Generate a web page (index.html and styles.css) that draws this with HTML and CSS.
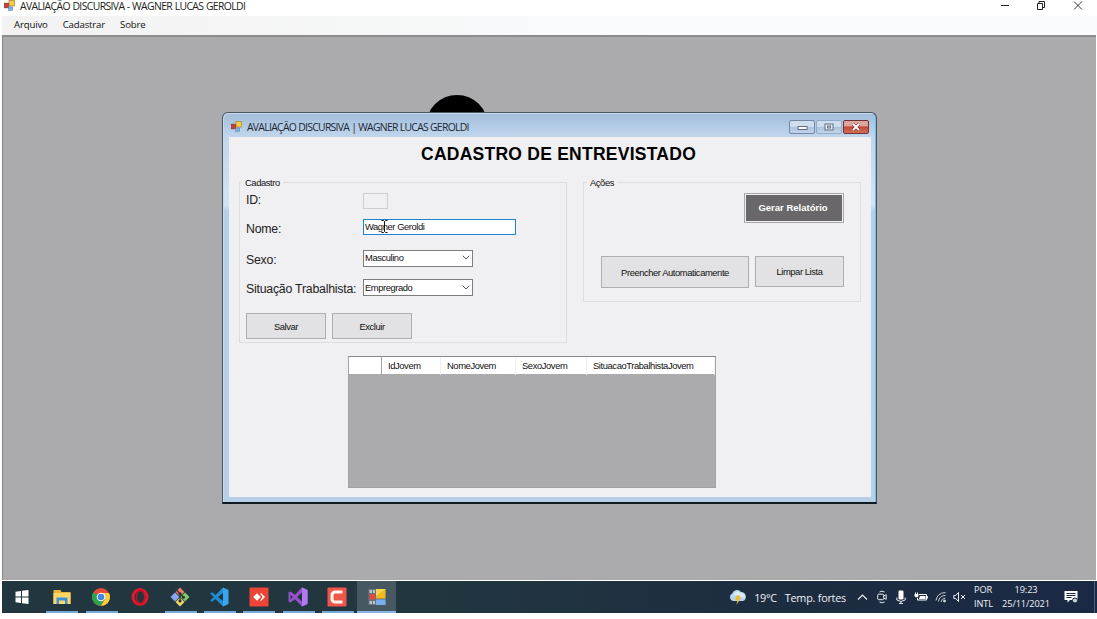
FILE: index.html
```html
<!DOCTYPE html>
<html lang="pt-BR">
<head>
<meta charset="utf-8">
<title>AVALIAÇÃO DISCURSIVA</title>
<link rel="stylesheet" href="styles.css">
</head>
<body>
<svg width="0" height="0" class="defs">
  <defs>
    <symbol id="form" viewBox="0 0 12 12">
      <rect x="5.5" y="0.5" width="6" height="6" fill="#f6cf4a" stroke="#a8862b" stroke-width=".8"/>
      <rect x="0.5" y="3.5" width="4.500" height="5" fill="#cf4034" stroke="#8f3029" stroke-width=".8"/>
      <rect x="5" y="7.500" width="4.500" height="3.700" fill="#7eaee6" stroke="#5e7fae" stroke-width=".6"/>
    </symbol>
  </defs>
</svg>
<header class="titlebar">
  <svg class="appicon" width="11" height="11"><use href="#form"/></svg>
  <span class="caption">AVALIAÇÃO DISCURSIVA - WAGNER LUCAS GEROLDI</span>
  <svg class="winctl" width="84" height="12" viewBox="0 0 84 12" fill="none" stroke="#222">
    <path d="M1 5.500h8"/><path d="M37.500 3.500h5v6h-5zM39 3.500V1.500h5.500v6h-2"/><path d="M74 1.500l8 8M82 1.500l-8 8" stroke-width=".9"/>
  </svg>
</header>
<nav class="menubar"><span>Arquivo</span><span>Cadastrar</span><span>Sobre</span></nav>
<main class="mdi">
  <div class="disc"></div>
  <section class="dialog">
    <div class="dlg-title">
      <svg class="dlg-icon" width="11" height="11"><use href="#form"/></svg>
      <span class="dlg-caption">AVALIAÇÃO DISCURSIVA | WAGNER LUCAS GEROLDI</span>
      <span class="ctl"><svg width="11" height="8" viewBox="0 0 11 8"><rect x="1" y="3.500" width="9" height="3" fill="#fff" stroke="#5d6d83"/></svg></span>
      <span class="ctl ctl-max"><svg width="10" height="8" viewBox="0 0 10 8" fill="none" stroke="#5d6d83"><rect x="1" y="1" width="8" height="6" fill="#e6eef8"/><rect x="3.500" y="3" width="3" height="2"/></svg></span>
      <span class="ctl ctl-close"><svg width="10" height="8" viewBox="0 0 10 8"><path d="M2 1l6 6M8 1l-6 6" stroke="#7c3530" stroke-width="3.200"/><path d="M2 1l6 6M8 1l-6 6" stroke="#fff" stroke-width="1.900"/></svg></span>
    </div>
    <div class="client">
      <h1>CADASTRO DE ENTREVISTADO</h1>
      <div class="groups">
        <fieldset class="group group-form">
          <legend>Cadastro</legend>
          <div class="fields">
            <label class="first">ID:</label><div class="box box-id"></div>
            <label class="low">Nome:</label><div class="box box-name">Wagner Geroldi
              <svg class="ibeam" width="7" height="13" viewBox="0 0 7 13"><path d="M.5 .5h2l1 1 1-1h2M3.500 1.500v10M.5 12.500h2l1-1 1 1h2" fill="none" stroke="#111"/></svg></div>
            <label class="low">Sexo:</label><div class="box combo">Masculino<svg width="8" height="5" viewBox="0 0 8 5"><path d="M.7 .7L4 4 7.300 .7" fill="none" stroke="#555"/></svg></div>
            <label class="low last">Situação Trabalhista:</label><div class="box combo">Empregrado<svg width="8" height="5" viewBox="0 0 8 5"><path d="M.7 .7L4 4 7.300 .7" fill="none" stroke="#555"/></svg></div>
          </div>
          <div class="buttons"><span class="btn">Salvar</span><span class="btn">Excluir</span></div>
        </fieldset>
        <fieldset class="group group-actions">
          <legend>Ações</legend>
          <div class="report">Gerar Relatório</div>
          <div class="actions"><span class="btn btn-fill">Preencher Automaticamente</span><span class="btn btn-clear">Limpar Lista</span></div>
        </fieldset>
      </div>
      <div class="grid">
        <div class="grid-head"><span></span><span>IdJovem</span><span>NomeJovem</span><span>SexoJovem</span><span>SituacaoTrabalhistaJovem</span></div>
      </div>
    </div>
  </section>
</main>
<footer class="taskbar">
  <div class="apps">
    <span class="app"><svg width="20" height="20" viewBox="0 0 20 20" fill="#fff"><path d="M3.500 4.800l5.500-.8v5.500H3.500zM10 3.800l6.500-.9v6.600H10zM3.500 10.500H9V16l-5.500-.8zM10 10.500h6.500v6.600l-6.500-.9z"/></svg></span>
    <span class="app open"><svg width="20" height="20" viewBox="0 0 20 20"><path d="M1.500 3h7l1 2h9v12h-17z" fill="#e9b53c"/><path d="M1.500 6h17v11h-17z" fill="#fbd768"/><path d="M4.500 10.500h11V17H13v-3.500H7V17H4.500z" fill="#3d93d8"/></svg></span>
    <span class="app open"><svg width="20" height="20" viewBox="0 0 20 20"><circle cx="10" cy="10" r="9" fill="#e5493a"/><path d="M2.200 5.500A9 9 0 0 0 9.500 19L14 12.200 10 10z" fill="#2ba24c"/><path d="M10 19A9 9 0 0 0 18 6h-8l4 6z" fill="#fbcf3b"/><circle cx="10" cy="10" r="4.300" fill="#fff"/><circle cx="10" cy="10" r="3.300" fill="#4285e8"/></svg></span>
    <span class="app"><svg width="20" height="20" viewBox="0 0 20 20"><ellipse cx="10" cy="10" rx="7" ry="7.500" fill="none" stroke="#e2182d" stroke-width="3"/><ellipse cx="10.500" cy="10" rx="4.200" ry="6.500" fill="none" stroke="#c11427" stroke-width="1.500"/></svg></span>
    <span class="app open"><svg width="20" height="20" viewBox="0 0 20 20"><path d="M10 .5l4.500 4.500L10 9.500 5.500 5z" fill="#ef7b69"/><path d="M5 5.500L9.500 10 5 14.500.5 10z" fill="#8ba5ec"/><path d="M15 5.500l4.500 4.500-4.500 4.500L10.500 10z" fill="#86cb65"/><path d="M10 10.500l4.500 4.500L10 19.500 5.500 15z" fill="#f3d866"/><path d="M7 3.500L13.500 10.300M10 7v7" stroke="#263238" stroke-width="1.200"/><g fill="#263238"><circle cx="10" cy="6.800" r="1.500"/><circle cx="13.500" cy="10.300" r="1.500"/><circle cx="10" cy="14" r="1.600"/></g></svg></span>
    <span class="app open"><svg width="20" height="20" viewBox="0 0 20 20"><path d="M14 .5L6.500 8 3 5.200 1 6.300 4.800 10 1 13.700l2 1.100L6.500 12l7.500 7.500V14L9 10l5-4z" fill="#238bd0"/><path d="M14 .5l5.500 2.500v14L14 19.500z" fill="#39a5ee"/></svg></span>
    <span class="app open"><svg width="20" height="20" viewBox="0 0 20 20"><path d="M.5.5h19v19H.5z" fill="#ed4438"/><path d="M8 6.200L11.800 10 8 13.800 4.200 10zM11 6.200l1.200 0L16 10l-3.800 3.800H11L13.500 10z" fill="#fff"/></svg></span>
    <span class="app open"><svg width="20" height="20" viewBox="0 0 20 20"><path d="M14 .5L7 7.800 2.500 4.500.5 5.500v9l2 1 4.500-3.300 7 7.300 5.500-2.500V3z" fill="#9452ce"/><path d="M14 .5l5.500 2.500v14L14 19.500z" fill="#b27aec"/><path d="M14 5.500v9L9 10zM2.500 7.500L4.700 10l-2.200 2.500z" fill="#223540"/></svg></span>
    <span class="app open"><svg width="20" height="20" viewBox="0 0 20 20"><rect x=".5" y=".5" width="19" height="19" rx="1" fill="#ef5548"/><path d="M15.500 5H8a3 3 0 0 0-3 3v4a3 3 0 0 0 3 3h7.500" fill="none" stroke="#fff7ef" stroke-width="3"/></svg></span>
    <span class="app open active"><svg width="20" height="20" viewBox="0 0 20 20"><path d="M1.500 2h17v16h-17z" fill="#69757d"/><path d="M9 2h9.500v9.500H9z" fill="#f0b91e"/><path d="M9 2h9.500L9 9z" fill="#f9d651"/><path d="M2.500 7H8v5.500H2.500z" fill="#df4a42"/><path d="M9 12.500h9.500V18H9z" fill="#78aeef"/><path d="M2.500 3H5v3H2.500zM6 3h2v3H6zM2.500 14H5v3H2.500zM6 14h2v3H6z" fill="#bcc5ca"/></svg></span>
  </div>
  <div class="tray">
    <svg width="20" height="18" viewBox="0 0 20 18"><path d="M5 13a4 4 0 0 1-.8-7.500A5 5 0 0 1 13 4a4.700 4.700 0 0 1 2 9z" fill="#b5d8ee"/><path d="M6 7a4 4 0 0 1 7-2 4 4 0 0 1 4 5" fill="#dcedf7"/><path d="M8.500 7.500h4L11 10.500h2L8.500 16.500 9.500 12H7z" fill="#f4b92f"/></svg>
    <span class="temp">19°C</span><span class="weather">Temp. fortes</span>
    <svg class="chev" width="11" height="8" viewBox="0 0 11 8"><path d="M1 6.500L5.500 2 10 6.500" fill="none" stroke="#e6eaee" stroke-width="1.200"/></svg>
    <svg class="cam" width="10" height="14" viewBox="0 0 10 14" fill="none" stroke="#e6eaee"><rect x=".7" y="4.200" width="6" height="5.500" rx="1"/><path d="M6.700 6l2.500-1.300v4.600L6.700 8M2.500 2Q5 .3 7.500 2M2.500 12Q5 13.700 7.500 12"/></svg>
    <svg class="mic" width="10" height="14" viewBox="0 0 10 14"><rect x="2.500" y=".5" width="5" height="9" rx="1.200" fill="#fff"/><path d="M.8 7.500v2.500q4.200 3 8.400 0V7.500M5 11.500v2M3 13.500h4" fill="none" stroke="#e6eaee"/></svg>
    <svg class="bat" width="14" height="10" viewBox="0 0 14 10"><path d="M5 2.500h7.500v5.500H3.500V6M12.500 4.500h1v2" fill="none" stroke="#fff"/><path d="M6 4h5.500v3H5zM.5 2h4v2L3.500 5.200H1.500L.5 4zM1 .5h1v2H1zM3 .5h1v2H3z" fill="#fff"/></svg>
    <svg class="wifi" width="12" height="12" viewBox="0 0 12 12" fill="none" stroke="#c3cad3"><path d="M1 9.500Q2 2 10.500 1.500M3.500 10.500Q4 5 10.500 4.300M6 11Q6.500 7.500 10.500 7"/><circle cx="9.500" cy="10" r="1" fill="#fff"/></svg>
    <svg class="vol" width="13" height="12" viewBox="0 0 13 12" fill="none" stroke="#eef1f4"><path d="M.8 4.500h1.800L5.500 1.500v9L2.600 7.500H.8zM8 4l4 4M12 4L8 8"/></svg>
    <div class="lang"><span>POR</span><span>INTL</span></div>
    <div class="clock"><span>19:23</span><span class="date">25/11/2021</span></div>
    <svg class="note" width="14" height="14" viewBox="0 0 14 14"><path d="M.5 1h13v9H6l-2.500 2.500V10h-3z" fill="#fff"/><path d="M2.500 3.500h9M2.500 5.500h9M2.500 7.500h5" stroke="#1b2a42"/><circle cx="11" cy="10.500" r="2.500" fill="#cbd2da" stroke="#1b2a42"/></svg>
    <i class="peek"></i>
  </div>
</footer>
</body>
</html>
```
FILE: styles.css
```css
* { box-sizing: border-box; }
body { margin: 0; width: 1097px; height: 619px; overflow: hidden; background: #fff; font-family: "Liberation Sans", Arial, sans-serif; color: #111; white-space: nowrap; }
.defs { position: absolute; }
svg { display: block; flex: none; }

.titlebar { display: flex; height: 16px; padding-left: 4px; background: #fefffe; font: 10.4px/13px "Open Sans", sans-serif; color: #222; }
.caption { margin-left: 5px; letter-spacing: -0.61px; word-spacing: 0.4px; }
.winctl { margin-left: auto; margin-right: 13px; }
.menubar { display: flex; height: 19px; margin-left: 2px; padding-left: 12px; gap: 15px; background: linear-gradient(90deg, #f2f2f2, #fafbfc 60%); font: 9.6px/18px "Open Sans", sans-serif; letter-spacing: -0.15px; }

.mdi { position: relative; height: 545px; margin: 0 1px 0 2px; background: #abaaac; border-top: 2px solid #8c8c8c; border-left: 1px solid #858585; }
.disc { position: absolute; left: 423px; top: 58px; width: 62px; height: 62px; border-radius: 50%; background: #000; }

.dialog { position: absolute; left: 219px; top: 75px; width: 655px; height: 392px; border: 1px solid #4c5660; border-bottom: 2px solid #101820; border-radius: 6px 6px 0 0; padding: 0 5px 0 6px; background: linear-gradient(#a1bddb 0, #c1d6ec 24px, #d3e4f4 92px, #b4cfe8 98px, #b7cfe7); box-shadow: inset 1px 1px 0 #cbdcec, inset -1px 0 0 #66bfe8; }
.dlg-title { display: flex; height: 24px; padding: 6px 2px 0 2px; font: 10.4px/17px "Open Sans", sans-serif; color: #1b2633; }
.dlg-icon { margin-top: 2px; }
.dlg-caption { margin-left: 5px; margin-right: auto; letter-spacing: -0.7px; }
.ctl { display: flex; align-items: center; justify-content: center; width: 26px; height: 14px; margin: 1px 0 0 1px; border: 1px solid #7288a3; border-radius: 2px; background: linear-gradient(#cfdeef 45%, #abc3de 50%, #c2d5ea); }
.ctl-max { border-color: #94abc6; }
.ctl-close { border-color: #6d3237; background: linear-gradient(#dda59b 40%, #c34631 50%, #d2705a); }
.client { height: 360px; background: #f0eff1; }
h1 { height: 34px; margin: 0; padding-left: 17px; font-size: 17.5px; line-height: 35px; letter-spacing: 0.25px; text-align: center; color: #000; }
.groups { display: flex; gap: 16px; height: 172px; padding: 5px 0 0 10px; align-items: flex-start; font-size: 9.4px; letter-spacing: -0.42px; }
.group { min-width: 0; margin: 0; border: 1px solid #dddcde; }
.group-form { width: 328px; height: 167px; padding: 0 6px; }
.group-actions { width: 278px; height: 126px; padding: 0 16px 0 17px; }
legend { height: 12px; line-height: 13px; padding: 0 3px; margin-left: -4px; }
.group-actions legend { margin-left: -14px; }
.fields { display: grid; grid-template-columns: 117px auto; grid-template-rows: 25px 28px 34px 25px; align-items: center; }
label { font-size: 12.3px; letter-spacing: -0.22px; color: #222; }
.first { padding-bottom: 2px; }
.low { padding-top: 4px; }
.last { padding-top: 3px; }
.box { display: flex; align-items: center; height: 17px; padding: 0 2px 1px 1px; background: #fff; border: 1px solid #7d7d80; }
.box-id { width: 25px; height: 16px; background: #f0eff1; border-color: #cdccd0; }
.box-name { position: relative; width: 153px; height: 16px; border-color: #1c84d0; }
.ibeam { position: absolute; left: 17px; top: 0; }
.combo { width: 110px; justify-content: space-between; padding-right: 2px; }
.buttons { display: flex; gap: 6px; margin-top: 13px; }
.btn { display: flex; align-items: center; justify-content: center; width: 80px; height: 26px; background: #e2e1e3; border: 1px solid #aeaeb1; }
.report { width: 100px; height: 30px; padding-right: 2px; margin: 5px 0 0 auto; border: 1px solid #a9a9ac; box-shadow: inset 0 0 0 1px #eeedef; background: #69676a; color: #fff; font-weight: bold; font-size: 9.5px; line-height: 28px; text-align: center; letter-spacing: 0; }
.actions { display: flex; gap: 6px; margin-top: 33px; }
.btn-fill { width: 148px; height: 32px; }
.btn-clear { width: 89px; height: 31px; }
.grid { width: 368px; height: 132px; margin: 13px 0 0 119px; background: #abaaac; border: 1px solid #a3a3a6; border-top-color: #8a8a8d; font-size: 9.4px; letter-spacing: -0.4px; }
.grid-head { display: grid; grid-template-columns: 33px 59px 75px 71px auto; height: 17px; background: #fff; line-height: 18px; }
.grid-head span { padding-left: 6px; border-right: 1px solid #f1f1f1; }
.grid-head span:first-child { border-color: #a3a3a6; }

.taskbar { display: flex; justify-content: space-between; height: 32px; margin: 1px 0 0 2px; background: linear-gradient(90deg, #21363e, #21363f 40%, #1d2d40 70%, #1a2844); color: #eef1f4; font-family: "Open Sans", sans-serif; }
.apps { display: flex; }
.app { display: flex; align-items: center; justify-content: center; width: 39.4px; height: 32px; padding-left: 1px; }
.open { background: linear-gradient(#79a9d8, #79a9d8) 5px bottom / 32px 2px no-repeat; }
.active { background: linear-gradient(#8bb2df, #8bb2df) center bottom / 100% 2px no-repeat, #465963; }
.tray { display: flex; align-items: center; height: 32px; font-size: 10.8px; }
.temp { margin-left: 6px; letter-spacing: -0.3px; }
.weather { margin-left: 8px; letter-spacing: -0.22px; }
.chev { margin-left: 11px; }
.cam { margin-left: 9px; }
.mic { margin-left: 9px; }
.bat { margin-left: 8px; }
.wifi { margin-left: 7px; }
.vol { margin-left: 6px; }
.lang, .clock { display: flex; flex-direction: column; font-size: 9.2px; line-height: 14px; letter-spacing: -0.1px; }
.lang { width: 22px; margin-left: 8px; }
.clock { align-items: center; width: 48px; margin-left: 6px; }
.note { margin-left: 14px; }
.peek { width: 1px; height: 32px; margin: 0 2px 0 16px; background: #52617a; }
```
